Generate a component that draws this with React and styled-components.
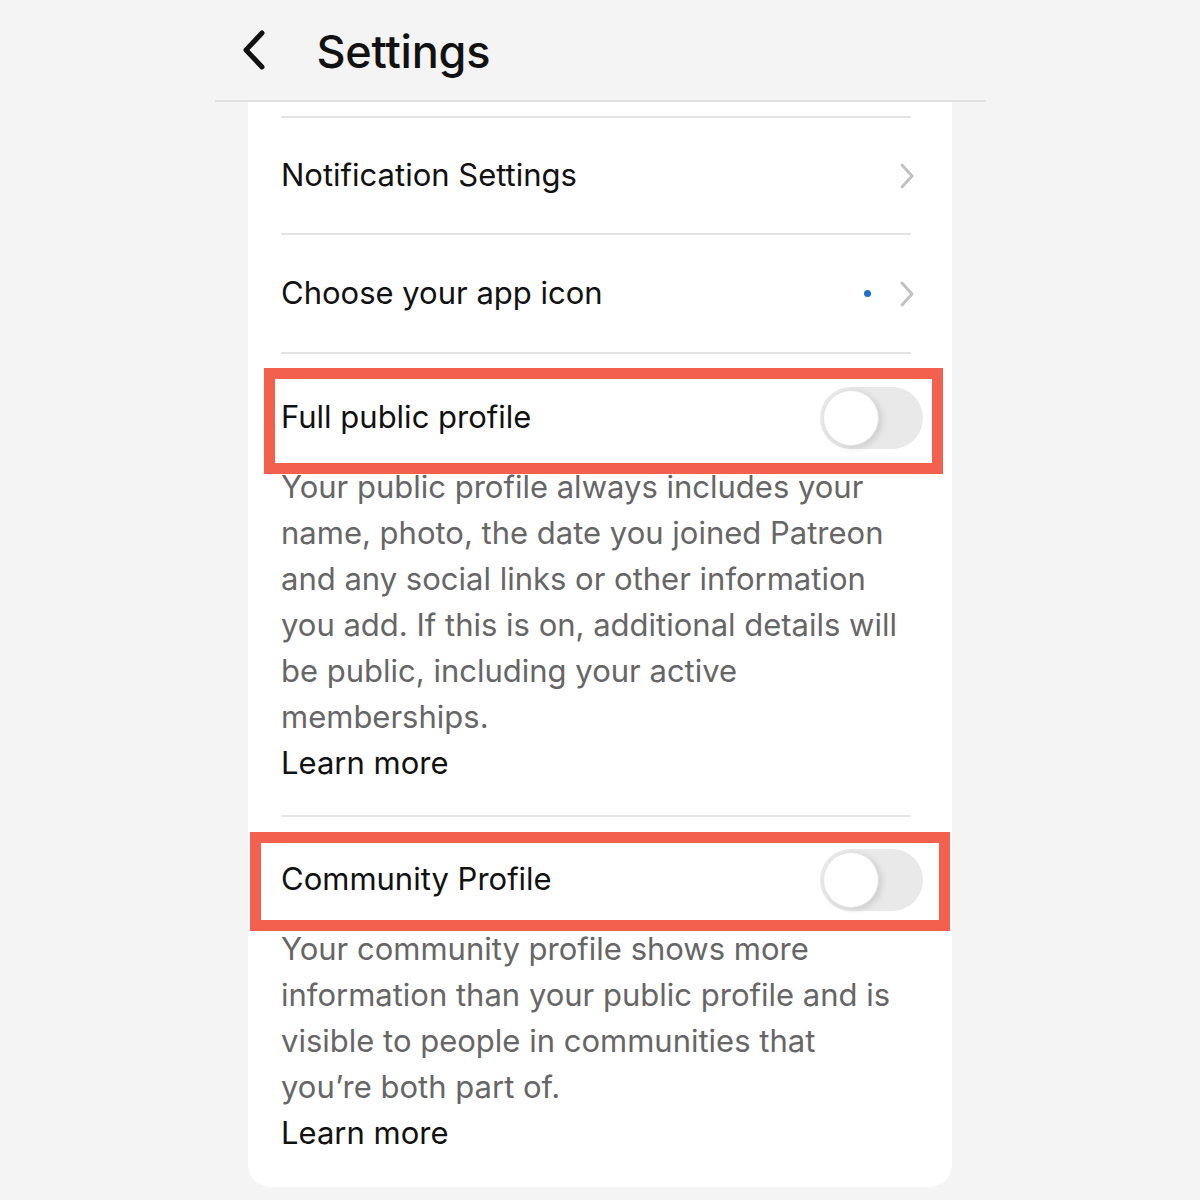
import React from 'react';
import styled, { createGlobalStyle } from 'styled-components';

const GlobalStyle = createGlobalStyle`
  html, body {
    margin: 0;
    padding: 0;
    background: #f4f4f4;
  }
  body {
    font-family: Inter, "Noto Sans", "Liberation Sans", sans-serif;
    color: #111;
  }
`

const Page = styled.div`
  width: 771px;
  margin: 0 auto;
  min-height: 1200px;
`
const Header = styled.header`
  height: 100px;
  display: flex;
  align-items: center;
  padding-left: 26px;
  gap: 50px;
  border-bottom: 2px solid #e0e0e0;
`
const BackButton = styled.button`
  border: none;
  background: none;
  padding: 0;
  display: flex;
  align-items: center;
  cursor: pointer;
`
const Title = styled.h1`
  margin: 2px 0 0;
  font-size: 45px;
  font-weight: 500;
  letter-spacing: -0.2px;
  color: #111;
`
const Card = styled.div`
  width: 704px;
  margin: 0 auto;
  background: #fff;
  border-radius: 0 0 22px 22px;
  padding: 14px 0 31px 33px;
  box-sizing: border-box;
`
const Divider = styled.div`
  height: 2px;
  background: #e4e4e4;
  margin-right: 41px;
`
const LinkRow = styled.div`
  height: ${p => p.$h}px;
  display: flex;
  align-items: center;
  padding-right: 37px;
  gap: 28px;
`
const RowLabel = styled.span`
  flex: 1;
  font-size: 31px;
  font-weight: 400;
  color: #111;
  margin-top: -3px;
`
const Dot = styled.span`
  width: 7px;
  height: 7px;
  border-radius: 50%;
  background: #1f6fc9;
`
const ToggleSection = styled.section`
  position: relative;
  padding: ${p => p.$top}px 0 ${p => p.$bottom}px 0;
`
const ToggleRow = styled.div`
  display: flex;
  align-items: center;
  justify-content: space-between;
  padding-right: 29px;
  margin-bottom: 15px;
`
const Highlight = styled.div`
  position: absolute;
  top: ${p => p.$top}px;
  left: ${p => p.$left}px;
  width: ${p => p.$w}px;
  height: ${p => p.$h}px;
  border: 11px solid #f4604e;
  box-sizing: border-box;
  pointer-events: none;
`
const Track = styled.div`
  width: 103px;
  height: 62px;
  border-radius: 31px;
  background: #e9e9ea;
  display: flex;
  align-items: center;
  padding: 0 3px;
  box-sizing: border-box;
`
const Knob = styled.div`
  width: 56px;
  height: 56px;
  border-radius: 50%;
  background: #fff;
  border: 1px solid #e2e2e2;
  box-sizing: border-box;
  box-shadow: 3px 2px 6px rgba(0, 0, 0, 0.12);
`
const Description = styled.p`
  margin: 0;
  max-width: 626px;
  font-size: 31px;
  line-height: 46px;
  color: #666;
`
const LearnMore = styled.a`
  display: block;
  font-size: 31px;
  line-height: 46px;
  color: #111;
  text-decoration: none;
`

const ChevronRight = () => (
  <svg width="16" height="28" viewBox="0 0 16 28" fill="none">
    <path d="M3 3 L13 14 L3 25" stroke="#c2c2c2" strokeWidth="3" strokeLinecap="round" strokeLinejoin="round" />
  </svg>
)

const ChevronLeft = () => (
  <svg width="26" height="40" viewBox="0 0 26 40" fill="none">
    <path d="M21 3 L5 20 L21 37" stroke="#111" strokeWidth="5" strokeLinecap="round" strokeLinejoin="round" />
  </svg>
)

const Toggle = () => (
  <Track>
    <Knob />
  </Track>
)

export default function App() {
  return (
    <Page>
      <GlobalStyle />
      <Header>
        <BackButton aria-label="Back">
          <ChevronLeft />
        </BackButton>
        <Title>Settings</Title>
      </Header>
      <Card>
        <Divider />
        <LinkRow $h={115}>
          <RowLabel>Notification Settings</RowLabel>
          <ChevronRight />
        </LinkRow>
        <Divider />
        <LinkRow $h={117}>
          <RowLabel>Choose your app icon</RowLabel>
          <Dot />
          <ChevronRight />
        </LinkRow>
        <Divider />
        <ToggleSection $top={33} $bottom={29}>
          <Highlight $top={14} $left={-17} $w={679} $h={106} />
          <ToggleRow>
            <RowLabel>Full public profile</RowLabel>
            <Toggle />
          </ToggleRow>
          <Description>
            Your public profile always includes your name, photo, the date you joined Patreon
            and any social links or other information you add. If this is on, additional
            details will be public, including your active memberships.
          </Description>
          <LearnMore href="#">Learn more</LearnMore>
        </ToggleSection>
        <Divider />
        <ToggleSection $top={32} $bottom={0}>
          <Highlight $top={15} $left={-31} $w={700} $h={99} />
          <ToggleRow>
            <RowLabel>Community Profile</RowLabel>
            <Toggle />
          </ToggleRow>
          <Description>
            Your community profile shows more information than your public profile and is
            visible to people in communities that you’re both part of.
          </Description>
          <LearnMore href="#">Learn more</LearnMore>
        </ToggleSection>
      </Card>
    </Page>
  )
}
